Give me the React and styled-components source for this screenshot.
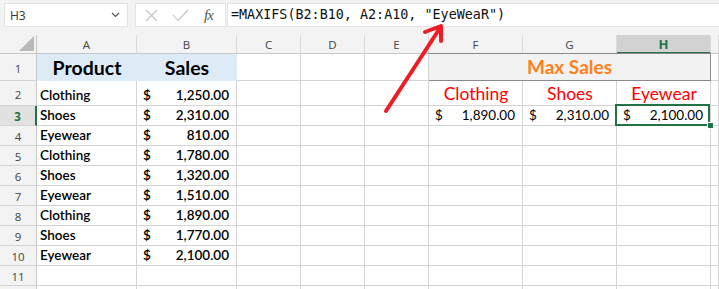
import React from 'react';
import styled, { createGlobalStyle, css } from 'styled-components';

const GREEN = '#217346';
const GRID = '#d4d4d4';

const GlobalStyle = createGlobalStyle`
  html, body {
    margin: 0;
    padding: 0;
    background: #ffffff;
    overflow: hidden;
  }
`;

const COLS = ['A', 'B', 'C', 'D', 'E', 'F', 'G', 'H', ''];

// A/B data block
const sales = [
  ['Clothing', '1,250.00'],
  ['Shoes', '2,310.00'],
  ['Eyewear', '810.00'],
  ['Clothing', '1,780.00'],
  ['Shoes', '1,320.00'],
  ['Eyewear', '1,510.00'],
  ['Clothing', '1,890.00'],
  ['Shoes', '1,770.00'],
  ['Eyewear', '2,100.00'],
];

const maxValues = ['1,890.00', '2,310.00', '2,100.00'];
const maxLabels = ['Clothing', 'Shoes', 'Eyewear'];

export default function App() {
  return (
    <Page>
      <GlobalStyle />
      <Toolbar>
        <NameBox>
          <span>H3</span>
          <svg width="9" height="6" viewBox="0 0 9 6">
            <path d="M1 1 L4.5 4.5 L8 1" fill="none" stroke="#555" strokeWidth="1.2" />
          </svg>
        </NameBox>
        <FxBox>
          <svg width="13" height="13" viewBox="0 0 13 13">
            <path d="M1 1 L12 12 M12 1 L1 12" stroke="#c4c4c4" strokeWidth="1.1" fill="none" />
          </svg>
          <svg width="17" height="13" viewBox="0 0 17 13">
            <path d="M1 6 L6 11.5 L16 1" stroke="#c4c4c4" strokeWidth="1.1" fill="none" />
          </svg>
          <FxText>fx</FxText>
        </FxBox>
        <Formula>=MAXIFS(B2:B10, A2:A10, "EyeWeaR")</Formula>
      </Toolbar>

      <Sheet>
        <Corner />
        {COLS.map((c) => (
          <ColHead key={c || 'I'} $selected={c === 'H'}>{c}</ColHead>
        ))}

        {/* row 1 */}
        <RowHead>1</RowHead>
        <Cell $fill="#ddebf7" $align="center" $size="19.5px" $weight={700} $noRight>Product</Cell>
        <Cell $fill="#ddebf7" $align="center" $size="19.5px" $weight={700}>Sales</Cell>
        <Cell />
        <Cell />
        <Cell />
        <MergedTitle>Max Sales</MergedTitle>
        <Cell />

        {/* row 2 */}
        <RowHead>2</RowHead>
        <Cell $weight={600}>{sales[0][0]}</Cell>
        <Money $weight={600} value={sales[0][1]} />
        <Cell />
        <Cell />
        <Cell />
        {maxLabels.map((l) => (
          <Cell key={l} $align="center" $size="17.5px" $color="#ff0000">{l}</Cell>
        ))}
        <Cell />

        {/* rows 3..10 */}
        {sales.slice(1).map(([name, val], i) => {
          const r = i + 3;
          return (
            <React.Fragment key={r}>
              <RowHead $selected={r === 3}>{r}</RowHead>
              <Cell $weight={600}>{name}</Cell>
              <Money $weight={600} value={val} />
              <Cell />
              <Cell />
              <Cell />
              {r === 3
                ? maxValues.map((v, j) => <Money key={j} value={v} $selected={j === 2} />)
                : [0, 1, 2].map((j) => <Cell key={j} />)}
              <Cell />
            </React.Fragment>
          );
        })}

        {/* empty rows, row 12 is only a sliver at the bottom */}
        {[11, 12].map((r) => (
          <React.Fragment key={r}>
            <RowHead>{r === 11 ? r : ''}</RowHead>
            {COLS.map((c) => <Cell key={c || 'I'} />)}
          </React.Fragment>
        ))}
      </Sheet>

      <Arrow viewBox="0 0 719 289" width="719" height="289">
        <g stroke="#ee1c25" strokeWidth="4" strokeLinecap="round" strokeLinejoin="round" fill="none">
          <path d="M386 111 L440 28" />
          <path d="M425 32 L441 26 L441 41" />
        </g>
      </Arrow>
    </Page>
  );
}

function Money({ value, $weight, $selected }) {
  return (
    <Cell $weight={$weight} $money $selected={$selected}>
      <span>$</span>
      <span>{value}</span>
    </Cell>
  );
}

const Page = styled.div`
  position: relative;
  width: 719px;
  height: 289px;
  overflow: hidden;
  background: #ffffff;
  font-family: Lato, "Open Sans", sans-serif;
`;

const Toolbar = styled.div`
  display: flex;
  align-items: flex-start;
  height: 35px;
  box-sizing: border-box;
  padding: 3px 0 0 4px;
  background: #f3f3f3;
`;

const NameBox = styled.div`
  display: flex;
  align-items: center;
  justify-content: space-between;
  box-sizing: border-box;
  width: 124px;
  height: 24px;
  padding: 0 7px 0 5px;
  background: #ffffff;
  border: 1px solid #e3e3e3;
  color: #333;
  font-family: "Open Sans", "Noto Sans", sans-serif;
  font-size: 12px;
`;

const FxBox = styled.div`
  display: flex;
  align-items: center;
  box-sizing: border-box;
  width: 91px;
  height: 24px;
  margin-left: 7px;
  padding-left: 9px;
  gap: 14px;
  background: #ffffff;
  border: 1px solid #e3e3e3;
`;

const FxText = styled.i`
  margin-left: 1px;
  color: #555;
  font-family: "Liberation Serif", serif;
  font-size: 15px;
  letter-spacing: -1px;
`;

const Formula = styled.div`
  flex: 1;
  box-sizing: border-box;
  height: 24px;
  margin-left: 1px;
  padding-left: 3px;
  background: #ffffff;
  border: 1px solid #e3e3e3;
  border-right: none;
  color: #111;
  font-family: "DejaVu Sans Mono", "Liberation Mono", monospace;
  font-size: 13.4px;
  line-height: 21px;
  white-space: nowrap;
`;

const Sheet = styled.div`
  display: grid;
  grid-template-columns: 37px 100px 100px 64px 64px 64px 94px 94px 94px 1fr;
  grid-template-rows: 19px 27px 25px repeat(10, 20px);
`;

const Corner = styled.div`
  position: relative;
  box-sizing: border-box;
  background: #f3f3f3;
  border-right: 1px solid #c8c8c8;
  border-bottom: 1px solid #c8c8c8;
  &::after {
    content: '';
    position: absolute;
    right: 2px;
    bottom: 2px;
    border-style: solid;
    border-width: 0 0 15px 15px;
    border-color: transparent transparent #b8b8b8 transparent;
  }
`;

const ColHead = styled.div`
  display: flex;
  align-items: center;
  justify-content: center;
  box-sizing: border-box;
  background: #f3f3f3;
  border-right: 1px solid #dadada;
  border-bottom: 1px solid #c8c8c8;
  color: #444;
  font-family: "Open Sans", "Noto Sans", sans-serif;
  font-size: 11.5px;
  ${(p) => p.$selected && css`
    background: #d2d2d2;
    border-bottom: 2px solid ${GREEN};
    color: ${GREEN};
    font-weight: 700;
    font-size: 13px;
  `}
`;

const RowHead = styled.div`
  display: flex;
  align-items: center;
  justify-content: center;
  box-sizing: border-box;
  padding-top: 2px;
  background: #f3f3f3;
  border-right: 1px solid #c8c8c8;
  border-bottom: 1px solid ${GRID};
  color: #444;
  font-family: "Open Sans", "Noto Sans", sans-serif;
  font-size: 11.5px;
  ${(p) => p.$selected && css`
    background: #e1e1e1;
    border-right: 2px solid ${GREEN};
    color: ${GREEN};
    font-weight: 700;
  `}
`;

const Cell = styled.div`
  position: relative;
  display: flex;
  align-items: flex-end;
  justify-content: ${(p) => (p.$money ? 'space-between' : p.$align === 'center' ? 'center' : 'flex-start')};
  box-sizing: border-box;
  min-width: 0;
  padding: ${(p) => (p.$money ? '0 7px 3px 6px' : '0 2px 3px 3px')};
  background: ${(p) => p.$fill || '#ffffff'};
  border-right: 1px solid ${(p) => (p.$noRight || p.$fill ? p.$fill : GRID)};
  border-bottom: 1px solid ${(p) => p.$fill || GRID};
  color: ${(p) => p.$color || '#000'};
  font-size: ${(p) => p.$size || '13.5px'};
  font-weight: ${(p) => p.$weight || 400};
  line-height: 1;
  white-space: nowrap;
  ${(p) => p.$selected && css`
    &::after {
      content: '';
      position: absolute;
      top: -2px;
      left: -2px;
      right: 0;
      bottom: -1px;
      border: 2px solid ${GREEN};
    }
    &::before {
      content: '';
      position: absolute;
      right: -4px;
      bottom: -4px;
      width: 5px;
      height: 5px;
      background: ${GREEN};
      border: 1px solid #ffffff;
      z-index: 1;
    }
  `}
`;

const MergedTitle = styled.div`
  grid-column: span 3;
  display: flex;
  align-items: flex-end;
  justify-content: center;
  box-sizing: border-box;
  margin: -1px 0 0 -1px;
  padding-bottom: 4px;
  background: #f2f2f2;
  border: 1px solid #8a8a8a;
  color: #ff8019;
  font-size: 19px;
  font-weight: 700;
  line-height: 1;
`;

const Arrow = styled.svg`
  position: absolute;
  top: 0;
  left: 0;
  pointer-events: none;
`;
